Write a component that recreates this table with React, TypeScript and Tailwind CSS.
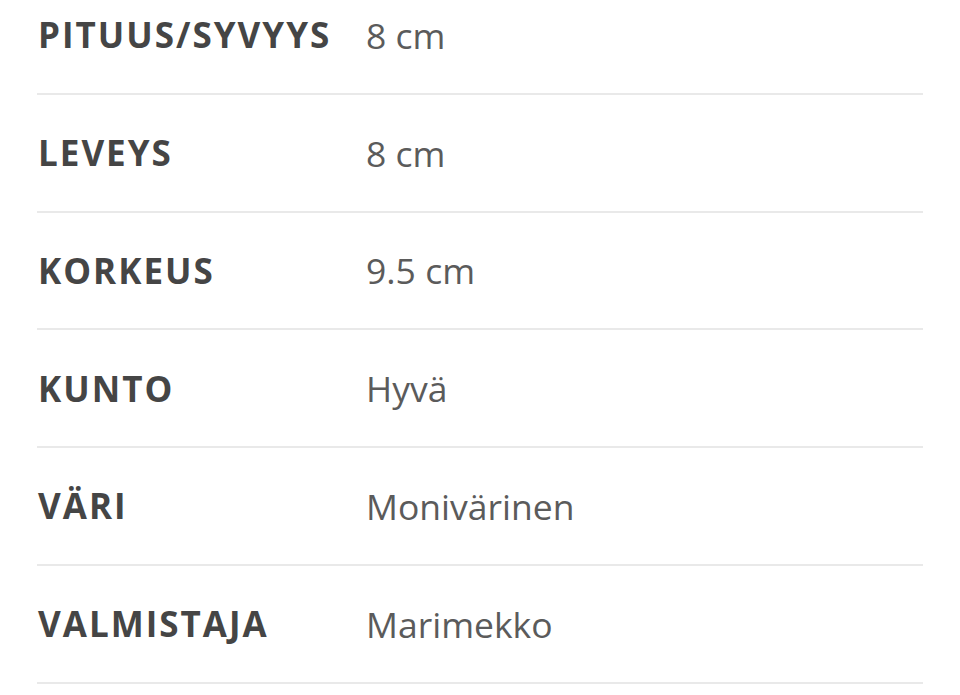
const rows = [
  { label: "PITUUS/SYVYYS", value: "8 cm" },
  { label: "LEVEYS", value: "8 cm" },
  { label: "KORKEUS", value: "9.5 cm" },
  { label: "KUNTO", value: "Hyvä" },
  { label: "VÄRI", value: "Monivärinen" },
  { label: "VALMISTAJA", value: "Marimekko" },
];

export default function App() {
  return (
    <div className="w-[960px] h-[695px] overflow-hidden bg-white font-['Open_Sans',sans-serif]">
      <div className="mx-[37px] mt-[-23px]">
        {rows.map((r) => (
          <div
            key={r.label}
            className="flex items-center h-[117.8px] pt-[1px] border-b-2 border-[#e9e9e9]"
          >
            <div className="w-[329px] pl-px text-[35px] font-bold tracking-[2px] text-[#454545]">
              {r.label}
            </div>
            <div className="text-[35.5px] text-[#5b5b5b]">{r.value}</div>
          </div>
        ))}
      </div>
    </div>
  );
}
